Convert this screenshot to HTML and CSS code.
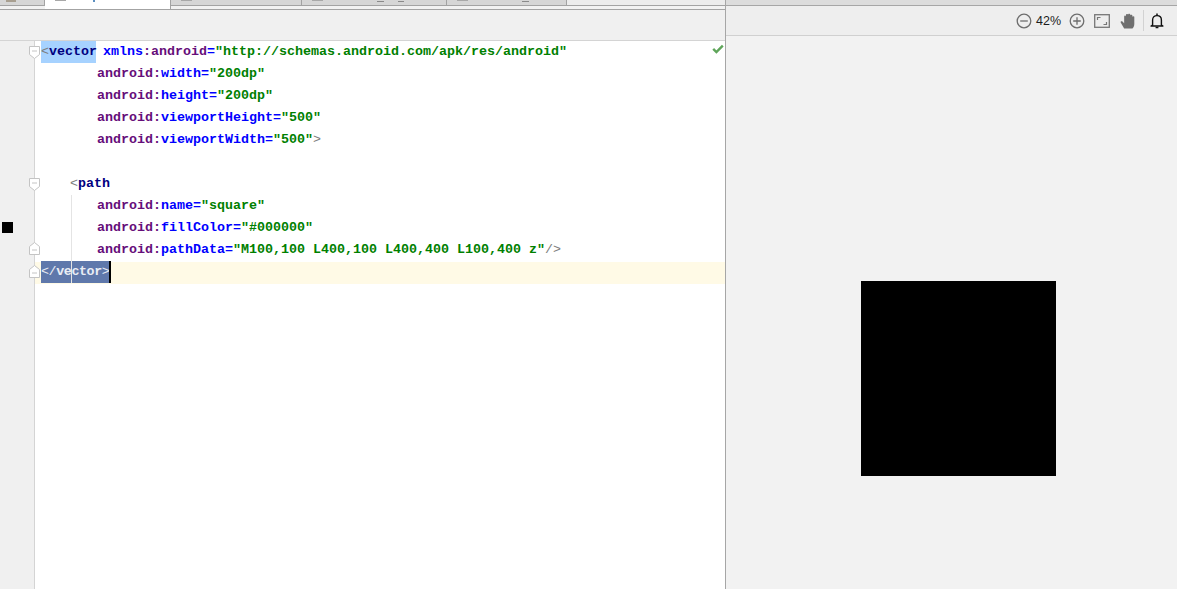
FILE: index.html
```html
<!DOCTYPE html>
<html lang="en">
<head>
<meta charset="utf-8">
<title>Vector editor</title>
<link rel="stylesheet" href="styles.css">
</head>
<body>
<div class="ide">
  <section class="left">
    <div class="tabs">
      <div class="tab tab-first"><i class="bit bit-a"></i></div>
      <div class="tab tab-active"><i class="bit bit-icon"></i><i class="bit bit-blue"></i></div>
      <div class="tab tab-third"><i class="bit bit-icon"></i></div>
      <div class="tab tab-fourth"><i class="bit bit-icon"></i><i class="bit bit-y"></i><i class="bit bit-u"></i></div>
      <div class="tab tab-fifth"><i class="bit bit-icon"></i><i class="bit bit-y"></i></div>
      <div class="tab-rest"></div>
    </div>
    <div class="editor-bar"></div>
    <div class="editor">
      <div class="gutter">
        <div class="swatch"></div>
      </div>
      <div class="code">
        <span class="guide"></span>
        <div class="line"><span class="sel"><span class="br">&lt;</span><span class="tag">vector</span></span> <span class="ns xm"><span class="nm">xmlns</span>:android</span><span class="nm">=</span><span class="val">"http://schemas.android.com/apk/res/android"</span></div>
        <div class="line attr"><span class="ns">android:</span><span class="nm">width</span><span class="nm">=</span><span class="val">"200dp"</span></div>
        <div class="line attr"><span class="ns">android:</span><span class="nm">height</span><span class="nm">=</span><span class="val">"200dp"</span></div>
        <div class="line attr"><span class="ns">android:</span><span class="nm">viewportHeight</span><span class="nm">=</span><span class="val">"500"</span></div>
        <div class="line attr"><span class="ns">android:</span><span class="nm">viewportWidth</span><span class="nm">=</span><span class="val">"500"</span><span class="br">&gt;</span></div>
        <div class="line"></div>
        <div class="line child"><span class="br">&lt;</span><span class="tag">path</span></div>
        <div class="line attr"><span class="ns">android:</span><span class="nm">name</span><span class="nm">=</span><span class="val">"square"</span></div>
        <div class="line attr"><span class="ns">android:</span><span class="nm">fillColor</span><span class="nm">=</span><span class="val">"#000000"</span></div>
        <div class="line attr"><span class="ns">android:</span><span class="nm">pathData</span><span class="nm">=</span><span class="val">"M100,100 L400,100 L400,400 L100,400 z"</span><span class="br">/&gt;</span></div>
        <div class="line current"><span class="sel-dark"><span class="br">&lt;/</span><span class="tag">vector</span><span class="br">&gt;</span></span><span class="caret"></span></div>
      </div>
      <svg class="check" viewBox="0 0 12 10" aria-hidden="true"><path d="M1.2 4.8 L4.4 8 L10.8 1.6" fill="none" stroke="#5fa55a" stroke-width="2.4"/></svg>
      <div class="current-band"></div>
      <svg class="fold f1" viewBox="0 0 11 13" aria-hidden="true"><path class="fold-shape" d="M.5 .5 H10.5 V8.5 L5.5 12.5 L.5 8.5 Z M3 5 H8"/></svg>
      <svg class="fold f2" viewBox="0 0 11 13" aria-hidden="true"><path class="fold-shape" d="M.5 .5 H10.5 V8.5 L5.5 12.5 L.5 8.5 Z M3 5 H8"/></svg>
      <svg class="fold f3" viewBox="0 0 11 13" aria-hidden="true"><path class="fold-shape" d="M.5 12.5 H10.5 V4.5 L5.5 .5 L.5 4.5 Z M3 8 H8"/></svg>
      <svg class="fold f4" viewBox="0 0 11 13" aria-hidden="true"><path class="fold-shape" d="M.5 12.5 H10.5 V4.5 L5.5 .5 L.5 4.5 Z M3 8 H8"/></svg>
    </div>
  </section>
  <section class="right">
    <div class="right-top"></div>
    <div class="preview-bar">
      <svg class="ic" viewBox="0 0 16 16" aria-hidden="true"><circle cx="8" cy="8" r="6.8" fill="none" stroke="#6e6e6e" stroke-width="1.3"/><path d="M4.2 8 H11.8" stroke="#6e6e6e" stroke-width="1.3"/></svg>
      <span class="zoom-val">42%</span>
      <svg class="ic ic-plus" viewBox="0 0 16 16" aria-hidden="true"><circle cx="8" cy="8" r="6.8" fill="none" stroke="#6e6e6e" stroke-width="1.3"/><path d="M4.2 8 H11.8 M8 4.2 V11.8" stroke="#6e6e6e" stroke-width="1.3"/></svg>
      <svg class="ic ic-fit" viewBox="0 0 16 14" aria-hidden="true"><rect x=".7" y=".7" width="14.6" height="12.6" fill="none" stroke="#777" stroke-width="1.3"/><path d="M3.5 6 V3.5 H6.5 M12.5 8 V10.5 H9.5" fill="none" stroke="#777" stroke-width="1.2"/></svg>
      <svg class="ic ic-hand" viewBox="0 0 13 16" preserveAspectRatio="none" aria-hidden="true"><path d="M3.6 15.5 L.6 9.5 C.2 8.5 1.6 7.8 2.3 8.7 L3.6 10.3 V3.4 C3.6 2.3 5.2 2.3 5.2 3.4 V2 C5.2 .8 7 .8 7 2 V1.6 C7 .4 8.9 .4 8.9 1.6 V2.6 C8.9 1.5 10.7 1.5 10.7 2.6 V3.8 C10.7 2.9 12.4 2.9 12.4 3.8 V11 C12.4 13 11.6 14.5 10.8 15.5 Z" fill="#6f6f6f"/></svg>
      <span class="bar-sep"></span>
      <svg class="ic ic-bell" viewBox="0 0 14 16" aria-hidden="true"><path d="M2.6 12 V7 C2.6 4.2 4.4 2.6 7 2.6 C9.6 2.6 11.4 4.2 11.4 7 V12 L13 13 H1 Z" fill="none" stroke="#111" stroke-width="1.4" stroke-linejoin="round"/><path d="M7 .4 V2.4 M5.6 14.6 H8.4" stroke="#111" stroke-width="1.5"/></svg>
    </div>
    <div class="preview">
      <div class="square"></div>
    </div>
  </section>
</div>
</body>
</html>
```
FILE: styles.css
```css
html, body {
  margin: 0;
  height: 100%;
  overflow: hidden;
  background: #f2f2f2;
}
.ide {
  display: flex;
  width: 1177px;
  height: 589px;
}
.left {
  width: 725px;
  display: flex;
  flex-direction: column;
  flex: none;
}
.right {
  flex: 1;
  display: flex;
  flex-direction: column;
  border-left: 1px solid #a6a6a6;
}

/* tab strip */
.tabs {
  display: flex;
  height: 9px;
  border-bottom: 1px solid #a3a3a3;
  background: #f2f2f2;
  flex: none;
}
.tab {
  position: relative;
  height: 5px;
  background: #d6d6d6;
  border-bottom: 1px solid #a3a3a3;
  border-right: 1px solid #a3a3a3;
  overflow: hidden;
  flex: none;
}
.tab-first { width: 44px; }
.tab-active { width: 125px; height: 9px; background: #fff; border-bottom: 0; }
.tab-third { width: 130px; }
.tab-fourth { width: 144px; }
.tab-fifth { width: 119px; }
.tab-rest {
  flex: 1;
  height: 5px;
  background: #ececec;
  border-bottom: 1px solid #a3a3a3;
}
.bit {
  position: absolute;
  top: 0;
  display: block;
  background: #a8a8a8;
}
.bit-icon { left: 10px; width: 11px; height: 1px; }
.bit-a { left: 6px; width: 10px; height: 2px; background: #a89f90; }
.bit-blue { left: 48px; width: 2px; height: 2px; background: #5c8fc0; }
.bit-y { left: 75px; width: 7px; height: 1px; top: 1px; background: #8a8a8a; }
.bit-u { left: 96px; width: 6px; height: 1px; top: 1px; background: #8a8a8a; }

.editor-bar {
  height: 30px;
  background: #f0f0f0;
  border-bottom: 1px solid #d4d4d4;
  flex: none;
}

/* editor */
.editor {
  position: relative;
  flex: 1;
  display: flex;
  background: #fff;
}
.gutter {
  position: relative;
  width: 34px;
  background: #f0f0f0;
  border-right: 1px solid #d4d4d4;
  flex: none;
  z-index: 3;
  background-clip: padding-box;
}
.swatch {
  position: absolute;
  left: 2px;
  top: 181px;
  width: 11px;
  height: 11px;
  background: #000;
}
.code {
  position: relative;
  flex: 1;
  padding-left: 6px;
  font: bold 13.333px/22px "Liberation Mono", "DejaVu Sans Mono", monospace;
  z-index: 3;
}
.line {
  height: 22px;
  white-space: pre;
}
.attr { padding-left: 56px; }
.child { padding-left: 29px; }
.tag { color: #000080; }
.ns { color: #660e7a; }
.nm { color: #0000ff; }
.val { color: #008000; }
.br { color: #7d7d7d; font-weight: normal; }
.sel {
  display: inline-block;
  width: 55px;
  height: 22px;
  background: #a6d2ff;
}
.xm { margin-left: -1px; }
.sel-dark {
  display: inline-block;
  width: 68px;
  height: 22px;
  letter-spacing: -.4px;
  background: #5f78ab;
  vertical-align: top;
}
.sel-dark .br, .sel-dark .tag { color: #e8ecf4; }
.caret {
  display: inline-block;
  width: 2px;
  height: 22px;
  background: #000;
  vertical-align: top;
}
.guide {
  position: absolute;
  left: 36px;
  top: 154px;
  width: 1px;
  height: 88px;
  background: #e4e4e4;
  z-index: 1;
}
.current-band {
  position: absolute;
  left: 0;
  right: 0;
  top: 221px;
  height: 22px;
  background: #fffae6;
  z-index: 2;
}
.check {
  position: absolute;
  left: 712px;
  top: 3px;
  width: 12px;
  height: 10px;
  z-index: 4;
}
.fold {
  position: absolute;
  left: 29px;
  width: 11px;
  height: 13px;
  z-index: 4;
}
.fold-shape {
  fill: #fff;
  stroke: #c4c4c4;
  stroke-width: 1;
}
.f1 { top: 5px; }
.f2 { top: 137px; }
.f3 { top: 201px; }
.f4 { top: 224px; }

/* preview */
.right-top {
  height: 5px;
  background: #dcdcdc;
  border-bottom: 1px solid #a6a6a6;
  flex: none;
}
.preview-bar {
  height: 29px;
  display: flex;
  align-items: center;
  padding-left: 290px;
  background: #eeeeee;
  border-bottom: 1px solid #d0d0d0;
  flex: none;
}
.ic { width: 16px; height: 16px; flex: none; }
.zoom-val {
  margin-left: 4px;
  width: 33px;
  font: 12.5px "Liberation Sans", Arial, sans-serif;
  color: #1c1c1c;
}
.ic-fit { margin-left: 9px; height: 14px; }
.ic-hand { margin-left: 10px; width: 15px; }
.bar-sep {
  width: 1px;
  height: 21px;
  margin-left: 8px;
  background: #d2d2d2;
}
.ic-bell { margin-left: 6px; width: 14px; }
.preview {
  flex: 1;
  padding: 245px 0 0 135px;
  background: #f2f2f2;
}
.square {
  width: 195px;
  height: 195px;
  background: #000;
}
```
